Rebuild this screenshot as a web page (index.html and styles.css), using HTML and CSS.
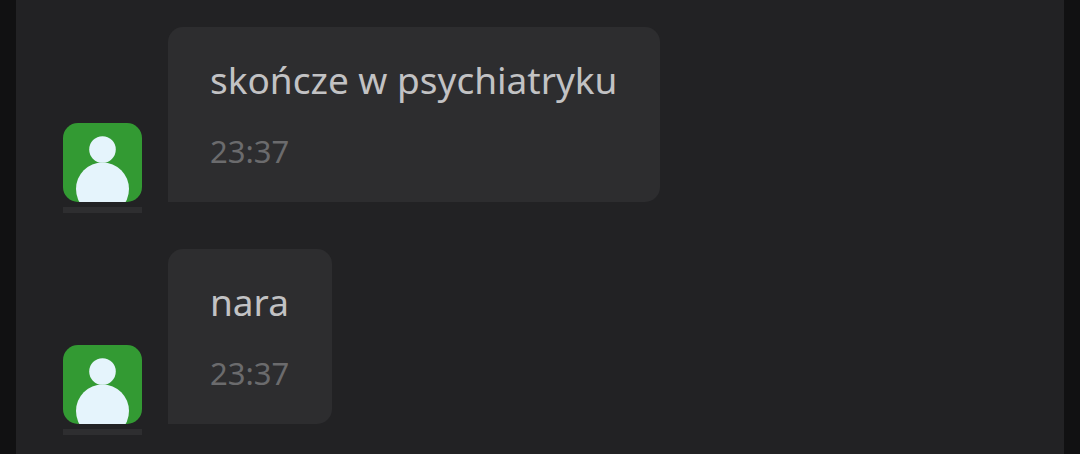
FILE: index.html
```html
<!DOCTYPE html>
<html lang="pl">
<head>
<meta charset="utf-8">
<meta name="viewport" content="width=device-width, initial-scale=1">
<title>Chat</title>
<link rel="stylesheet" href="styles.css">
</head>
<body>
<main class="chat">
  <article class="message">
    <div class="sender">
      <svg class="avatar" viewBox="0 0 79 79" aria-hidden="true"><circle cx="39.500" cy="26.500" r="13.300"/><circle cx="39.500" cy="66" r="26.500"/></svg>
      <div class="status"></div>
    </div>
    <div class="bubble">
      <p class="text">skończe w psychiatryku</p>
      <time class="time">23:37</time>
    </div>
  </article>
  <article class="message">
    <div class="sender">
      <svg class="avatar" viewBox="0 0 79 79" aria-hidden="true"><circle cx="39.500" cy="26.500" r="13.300"/><circle cx="39.500" cy="66" r="26.500"/></svg>
      <div class="status"></div>
    </div>
    <div class="bubble">
      <p class="text">nara</p>
      <time class="time">23:37</time>
    </div>
  </article>
</main>
</body>
</html>
```
FILE: styles.css
```css
* { box-sizing: border-box; }
body {
  margin: 0;
  background: #111112;
  font-family: "Noto Sans", "Open Sans", sans-serif;
}
.chat {
  min-height: 100vh;
  margin: 0 16px;
  padding: 27px 47px 19px;
  background: #222224;
  display: flex;
  flex-direction: column;
  gap: 36px;
}
.message {
  display: flex;
  align-items: flex-end;
  gap: 26px;
}
.sender {
  width: 79px;
  flex: none;
}
.avatar {
  display: block;
  width: 79px;
  height: 79px;
  border-radius: 15px;
  background: #339a33;
  fill: #e5f4fc;
}
.status {
  height: 6px;
  margin-top: 5px;
  background: #2e2e30;
}
.bubble {
  margin-bottom: 11px;
  padding: 26px 43px 27px 42px;
  background: #2d2d2f;
  border-radius: 15px 15px 15px 0;
}
.text {
  margin: 0 0 21px;
  font-size: 37px;
  line-height: 54px;
  color: #c2c2c4;
}
.time {
  display: block;
  font-size: 31px;
  line-height: 47px;
  color: #6b6b6d;
}
```
